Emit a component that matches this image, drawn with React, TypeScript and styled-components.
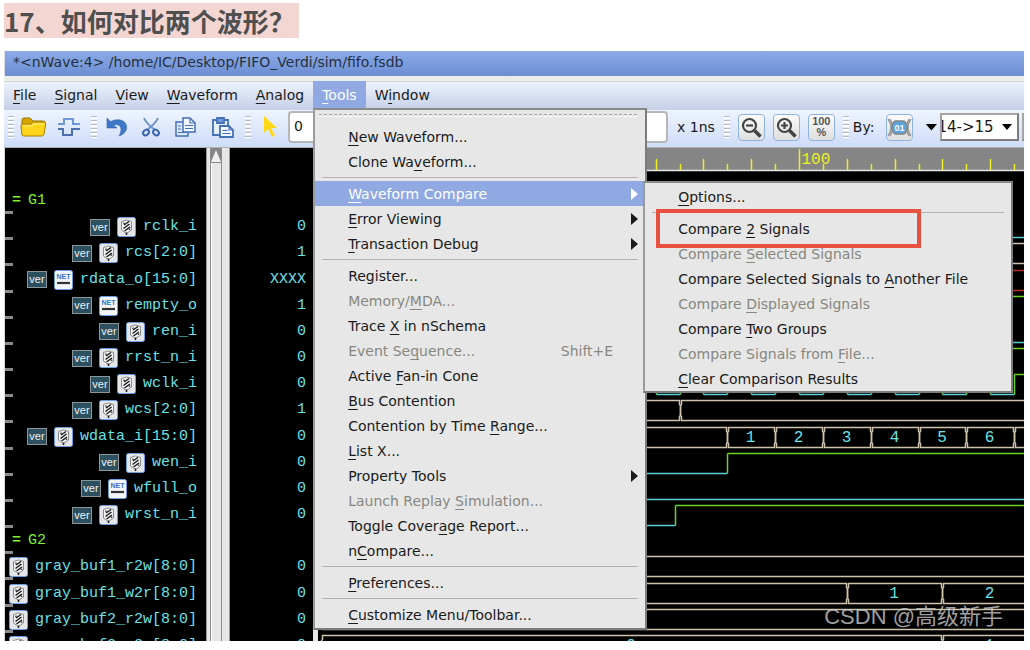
import React from "react";
import styled, { createGlobalStyle, css } from "styled-components";

const sans = `"DejaVu Sans", Verdana, sans-serif`;
const mono = `"Liberation Mono", "Courier New", monospace`;

const GlobalStyle = createGlobalStyle`
  *, *::before, *::after { box-sizing: border-box; }
  body { margin: 0; background: #fff; }
  button, input, select { font: inherit; color: inherit; margin: 0; }
`;

const Article = styled.main`
  padding: 3px 6px 8px 4px;
  font: 14px/20px ${sans};
  color: #1a1a1a;
`;

const Heading = styled.h1`
  margin: 0 0 13px;
  font: 700 26px/35px "Noto Sans CJK SC", sans-serif;
  color: #4f4f4f;

  span {
    display: inline-block;
    padding-right: 4px;
    background: #f3d6d1;
  }
`;

const AppWindow = styled.section`
  position: relative;
  background: #e6e6e6;
`;

const TitleBar = styled.header`
  height: 25px;
  padding: 0 8px;
  line-height: 22px;
  white-space: nowrap;
  color: #26303f;
  background: linear-gradient(#8cabea, #6b8dd0);
  border-left: 1px solid #d9dde6;
`;

const MenuBar = styled.nav`
  display: flex;
  height: 34px;
  border-top: 5px solid #ececec;
  box-shadow: inset 0 1px 0 #d2d2d2;
  background: linear-gradient(#eef4ff, #c5cfe6);
`;

const MenuSlot = styled.div`
  position: relative;
  display: flex;
`;

const MenuButton = styled.button<{ $open?: boolean }>`
  padding: 0 9px 2px;
  border: 0;
  background: ${(p) => (p.$open ? "#90a9e2" : "transparent")};
  color: ${(p) => (p.$open ? "#fff" : "#1a1a1a")};

  u { text-underline-offset: 3px; }
`;

const Popup = styled.div<{ $sub?: boolean }>`
  position: absolute;
  z-index: ${(p) => (p.$sub ? 3 : 2)};
  border: 2px solid #9a9a9a;
  border-top-color: #8a8a8a;
  border-right-color: #7c7c7c;
  border-bottom-color: #7c7c7c;
  background: #e7e7e7;
  color: #1a1a1a;
  ${(p) =>
    p.$sub
      ? css`
          top: 0;
          left: 328px;
          width: 370px;
          padding: 1px 0 0;
        `
      : css`
          top: 27px;
          left: 0;
          width: 334px;
          padding: 0 0 1px;
        `}
`;

const TearLine = styled.div`
  height: 14px;
  padding: 4px 8px 0 4px;

  &::after {
    content: "";
    display: block;
    height: 3px;
    border-top: 1px dashed #a3a3a3;
    border-bottom: 1px dashed #fff;
  }
`;

const Divider = styled.hr`
  height: 1px;
  margin: 3px 7px;
  border: 0;
  background: #b2b2b2;
`;

const ItemSlot = styled.div`
  position: relative;
`;

const Item = styled.button<{ $active?: boolean }>`
  display: flex;
  justify-content: space-between;
  align-items: center;
  width: 100%;
  height: 25px;
  padding: 0 32px 0 33px;
  border: 0;
  text-align: left;
  white-space: nowrap;
  background: ${(p) => (p.$active ? "#90a9e2" : "transparent")};
  color: ${(p) => (p.$active ? "#fff" : "#1a1a1a")};

  &:disabled { color: #878780; }
  u { text-underline-offset: 3px; }
`;

const ItemArrow = styled.span`
  width: 0;
  margin-right: -25px;
  border: solid transparent;
  border-width: 6px 0 6px 7px;
  border-left-color: ${"currentColor"};
`;

const Callout = styled.div`
  position: absolute;
  top: 26px;
  left: 11px;
  width: 265px;
  height: 39px;
  border: 4px solid #e8503f;
  pointer-events: none;
`;

const Toolbar = styled.div`
  display: flex;
  align-items: center;
  height: 37px;
  padding: 0 0 3px 4px;
  overflow: hidden;
  white-space: nowrap;
  background: linear-gradient(#eef4ff, #cfdcf8);
`;

const Grip = styled.span`
  flex: none;
  width: 6px;
  height: 22px;
  background: repeating-linear-gradient(#b4b9c4 0 1px, #fff 1px 3px, transparent 3px 4px);
`;

const ToolButton = styled.button`
  display: flex;
  flex: none;
  padding: 0;
  border: 0;
  background: none;
`;

const BoxButton = styled(ToolButton)`
  width: 27px;
  height: 27px;
  align-items: center;
  justify-content: center;
  border: 1px solid #8db4e3;
  border-radius: 4px;
  background: linear-gradient(#fcfcfc, #dedede);
`;

const Group = styled.div<{ $gap: number; $left: number }>`
  display: flex;
  flex: none;
  align-items: center;
  gap: ${(p) => p.$gap}px;
  margin-left: ${(p) => p.$left}px;
`;

const TimeField = styled.input`
  flex: none;
  width: 380px;
  height: 32px;
  margin-left: 11px;
  padding: 0 4px 3px;
  border: 2px solid #b6b6b6;
  border-radius: 4px;
  background: #fff;
`;

const SelectBox = styled.span<{ $wide?: boolean }>`
  position: relative;
  flex: none;
  width: ${(p) => (p.$wide ? 79 : 40)}px;
  height: 28px;
  margin-left: 3px;
  border: 2px solid #8b8b8b;
  border-color: #a5a5a5 #7c7c7c #7c7c7c #a5a5a5;
  background: #fff;
  overflow: hidden;

  &::after {
    content: "";
    position: absolute;
    top: 9px;
    right: 5px;
    border: solid transparent;
    border-width: 6px 5px 0;
    border-top-color: #000;
    pointer-events: none;
  }

  select {
    width: 100%;
    height: 24px;
    padding: 0;
    border: 0;
    appearance: none;
    background: transparent;
    text-indent: -5px;
    font-size: 15px;
  }
`;

const DropArrow = styled.button`
  flex: none;
  width: 12px;
  height: 7px;
  padding: 0;
  border: 0;
  background: #000;
  clip-path: polygon(0 0, 100% 0, 50% 100%);
`;

const Panes = styled.div`
  display: grid;
  grid-template-columns: 202px 24px 83px 5px minmax(0, 1fr);
  grid-template-rows: 100%;
  height: 494px;
  overflow: hidden;
  border-top: 1px solid #b0b0b0;
`;

const List = styled.ul`
  display: grid;
  grid-template-rows: repeat(18, minmax(0, 1fr));
  height: 511px;
  margin: 0;
  padding: 40px 7px 0 0;
  list-style: none;
  background: #000;
  color: #6fe0e4;
  font: 15px/20px ${mono};
`;

const Names = styled(List)`
  padding: 40px 9px 0 0;
  border-left: 1px solid #d8d8d8;
`;

const Row = styled.li`
  position: relative;
  display: flex;
  align-items: center;
  justify-content: flex-end;
  white-space: nowrap;
`;

const NameRow = styled(Row)<{ $group?: boolean }>`
  gap: 7px;
  ${(p) =>
    p.$group &&
    css`
      justify-content: flex-start;
      padding-left: 7px;
      color: #7ff02c;
    `}

  &::before {
    content: "";
    position: absolute;
    left: 0;
    bottom: 0;
    width: 8px;
    height: 3px;
    background: #8a8a8a;
  }
  svg { position: relative; flex: none; }
`;

const Badge = styled.span`
  width: 20px;
  height: 17px;
  border: 1px solid #8b979b;
  background: #2d5060;
  color: #eef3f4;
  font: 11px/15px "Liberation Sans", Arial, sans-serif;
  text-align: center;
`;

const ScrollArea = styled.div`
  padding: 0 7px 0 3px;
  background: #e6e6e6;
  border-left: 1px solid #999;
  border-right: 1px solid #999;
`;

const ScrollTrack = styled.div`
  height: 100%;
  border: solid #8c8c8c;
  border-width: 0 1px;
  background: #e6e6e6;
  box-shadow: inset 1px 0 #fff;
`;

const ScrollUp = styled.button`
  display: block;
  width: 100%;
  height: 15px;
  padding: 0;
  border: 0;
  background: #858585;

  &::after {
    content: "";
    display: block;
    width: 0;
    margin: 0 auto;
    border: solid transparent;
    border-width: 0 5px 12px;
    border-bottom-color: #f0f0f0;
  }
`;

const WavePane = styled.div`
  position: relative;
  background: #000;
  overflow: hidden;

  svg { display: block; width: 100%; height: 100%; }
  text { font-family: ${mono}; font-size: 16px; }
`;

const Watermark = styled.p`
  position: absolute;
  right: 21px;
  bottom: 8px;
  margin: 0;
  color: rgba(205, 205, 205, 0.78);
  font: 22px/32px "Liberation Sans", "Noto Sans CJK SC", sans-serif;
`;

/* ---------- icons ---------- */

const FolderIcon = () => (
  <svg width="27" height="22" viewBox="0 0 27 22">
    <path d="M2 18V4q0-2 2-2h6l3 3h10q2 0 2 2v4" fill="#d8a400" stroke="#987400" />
    <path d="M1 9.500q0-1.500 2-1.500h8l2-2h11q2 0 1.700 2l-1.700 10q-.3 2-2 2H4q-2 0-2.200-2z" fill="#ffd51c" stroke="#a88000" />
    <path d="M3 10h9l2-2h10" fill="none" stroke="#ffef8c" />
  </svg>
);

const PulseIcon = () => (
  <svg width="24" height="20" viewBox="0 0 24 20" fill="none" strokeWidth="2">
    <path d="M1 7h6V2h9v5h7" stroke="#6f98d8" />
    <path d="M1 12h5v6h9v-6h8" stroke="#4c6fae" />
  </svg>
);

const UndoIcon = () => (
  <svg width="21" height="20" viewBox="0 0 21 20">
    <path d="M1 1v10h10L7.500 8c4-1 7 0 7.500 4 0 2.500-.5 4.500-2 7 6-2 8-6 7.500-10C19.500 3 12 1 4.500 4.500z" fill="#3f78c8" stroke="#3465ad" strokeWidth=".6" />
  </svg>
);

const CutIcon = () => (
  <svg width="18" height="20" viewBox="0 0 18 20" fill="none">
    <path d="M2 1q2 5 11 12M16 1q-2 5-11 12" stroke="#6f90c6" strokeWidth="2" />
    <ellipse cx="4" cy="15.500" rx="3.200" ry="2.500" transform="rotate(-45 4 15.500)" stroke="#3766ae" strokeWidth="2" />
    <ellipse cx="14" cy="15.500" rx="3.200" ry="2.500" transform="rotate(45 14 15.500)" stroke="#3766ae" strokeWidth="2" />
  </svg>
);

const CopyIcon = () => (
  <svg width="22" height="20" viewBox="0 0 22 20" stroke="#4470b4" strokeWidth="1.500">
    <path d="M1 5h12v14H1z" fill="#dce8fb" />
    <path d="M8 1h7l5 5v9H8z" fill="#f1f6ff" />
    <path d="M15 1v5h5M10 8.500h8M10 11.500h8M3 9h3M3 12h3M3 15.500h8" fill="none" strokeWidth="1.200" />
  </svg>
);

const PasteIcon = () => (
  <svg width="22" height="21" viewBox="0 0 22 21" stroke="#4470b4" strokeWidth="1.800">
    <path d="M1 3h15v15H1z" fill="#e6effd" />
    <path d="M5 1h7v5H5z" fill="#6f98d8" />
    <path d="M8 9h9l4 4v7H8z" fill="#f1f6ff" />
    <path d="M17 9v4h4M10.500 13.500h5M10.500 16.500h8" fill="none" strokeWidth="1.200" />
  </svg>
);

const PointerIcon = () => (
  <svg width="14" height="22" viewBox="0 0 14 22">
    <path d="M1 0v17l4-4 4 8 3-1.500-4-7.500h6z" fill="#ffd914" />
  </svg>
);

const ZoomIcon = ({ plus }: { plus?: boolean }) => (
  <svg width="23" height="23" viewBox="0 0 23 23" fill="none" stroke="#444">
    <circle cx="9.500" cy="9.500" r="6.500" strokeWidth="2.200" />
    <path d="M14.500 14.500l6 6" strokeWidth="3.500" />
    <path d={plus ? "M6 9.500h7M9.500 6v7" : "M6 9.500h7"} strokeWidth="2.200" />
  </svg>
);

const FullZoomLabel = styled.span`
  font: 700 11px/11px "Liberation Sans", Arial, sans-serif;
  color: #555;
  text-align: center;
`;

const BusIcon = () => (
  <svg width="25" height="23" viewBox="0 0 25 23" fill="none" strokeWidth="1.500">
    <path d="M1 3q6 8.500 0 17M24 3q-6 8.500 0 17M3 3l4 8.500L3 20M22 3l-4 8.500 4 8.500" stroke="#999" />
    <path d="M8 5h9q3 2 3.500 6.500Q20 16 17 18H8q-3-2-3.500-6.500Q5 7 8 5z" fill="#5aa5dd" stroke="#858585" />
    <text x="12.500" y="15" textAnchor="middle" fill="#fff" fontFamily="Liberation Sans" fontSize="9" fontWeight="700">01</text>
  </svg>
);

const ModuleIcon = () => (
  <svg width="19" height="20" viewBox="0 0 19 20" fill="none">
    <rect x=".5" y=".5" width="18" height="19" rx="2" fill="#e4e6ea" stroke="#6c9ce0" />
    <path d="M4.500 4.500L9.500 3l5 1.500V13l-5 3.500-5-3.500z" fill="#f4f4f4" stroke="#8a8a8a" />
    <path d="M7 8l5-3.500M6.500 11.500l6-4.500M7.500 14l5.500-4M9.500 15.500V18" stroke="#1c1c1c" strokeWidth="1.500" />
    <path d="M7 5.500v1.500M12.500 11.500V13" stroke="#444" strokeWidth="1.500" />
  </svg>
);

const NetIcon = () => (
  <svg width="19" height="20" viewBox="0 0 19 20">
    <rect x=".5" y=".5" width="18" height="19" rx="2" fill="#f3f5f9" stroke="#6c9ce0" />
    <text x="9.500" y="9" textAnchor="middle" fill="#2f74c9" fontFamily="Liberation Sans" fontSize="7" fontWeight="700">NET</text>
    <path d="M3 13h13" stroke="#333" strokeWidth="2.200" />
  </svg>
);

/* ---------- data ---------- */

type Signal = { name: string; kind?: "reg" | "net"; ver?: boolean; value?: string };

const signals: Signal[] = [
  { name: "G1" },
  { name: "rclk_i", kind: "reg", ver: true, value: "0" },
  { name: "rcs[2:0]", kind: "reg", ver: true, value: "1" },
  { name: "rdata_o[15:0]", kind: "net", ver: true, value: "XXXX" },
  { name: "rempty_o", kind: "net", ver: true, value: "1" },
  { name: "ren_i", kind: "reg", ver: true, value: "0" },
  { name: "rrst_n_i", kind: "reg", ver: true, value: "0" },
  { name: "wclk_i", kind: "reg", ver: true, value: "0" },
  { name: "wcs[2:0]", kind: "reg", ver: true, value: "1" },
  { name: "wdata_i[15:0]", kind: "reg", ver: true, value: "0" },
  { name: "wen_i", kind: "reg", ver: true, value: "0" },
  { name: "wfull_o", kind: "net", ver: true, value: "0" },
  { name: "wrst_n_i", kind: "reg", ver: true, value: "0" },
  { name: "G2" },
  { name: "gray_buf1_r2w[8:0]", kind: "reg", value: "0" },
  { name: "gray_buf1_w2r[8:0]", kind: "reg", value: "0" },
  { name: "gray_buf2_r2w[8:0]", kind: "reg", value: "0" },
  { name: "gray_buf2_w2r[8:0]", kind: "reg", value: "0" },
];

type Entry = { label: string; off?: boolean; sub?: boolean; keys?: string } | "-";

/* An underscore marks the mnemonic letter that follows it. */
const toolsTop: Entry[] = [{ label: "_New Waveform..." }, { label: "Clone Wa_veform..." }, "-"];
const toolsRest: Entry[] = [
  { label: "_Error Viewing", sub: true },
  { label: "_Transaction Debug", sub: true },
  "-",
  { label: "Register..." },
  { label: "Memory/_MDA...", off: true },
  { label: "Trace _X in nSchema" },
  { label: "Event Se_quence...", off: true, keys: "Shift+E" },
  { label: "Active _Fan-in Cone" },
  { label: "_Bus Contention" },
  { label: "Contention by Time _Range..." },
  { label: "_List X..." },
  { label: "Property Tools", sub: true },
  { label: "Launch Replay _Simulation...", off: true },
  { label: "Toggle Cover_age Report..." },
  { label: "n_Compare..." },
  "-",
  { label: "_Preferences..." },
  "-",
  { label: "_Customize Menu/Toolbar..." },
];
const compareMenu: Entry[] = [
  { label: "_Options..." },
  "-",
  { label: "Compare _2 Signals" },
  { label: "Compare _Selected Signals", off: true },
  { label: "Compare Selected Signals to _Another File" },
  { label: "Compare _Displayed Signals", off: true },
  { label: "Compare _Two Groups" },
  { label: "Compare Signals from _File...", off: true },
  { label: "_Clear Comparison Results" },
];

const Mnemonic = ({ text }: { text: string }) => {
  const i = text.indexOf("_");
  if (i < 0) return <span>{text}</span>;
  return (
    <span>
      {text.slice(0, i)}
      <u>{text[i + 1]}</u>
      {text.slice(i + 2)}
    </span>
  );
};

const Entries = ({ items }: { items: Entry[] }) => (
  <>
    {items.map((e, i) =>
      e === "-" ? (
        <Divider key={i} />
      ) : (
        <Item key={i} role="menuitem" disabled={e.off}>
          <Mnemonic text={e.label} />
          {e.keys && <span>{e.keys}</span>}
          {e.sub && <ItemArrow />}
        </Item>
      )
    )}
  </>
);

/* ---------- waveforms ---------- */

const X = (ns: number) => Math.round(3 + 4.78 * ns) + 0.5;
const END = 600;
const CYAN = "#5ad0d8";
const GREEN = "#68d424";
const CREAM = "#cfc4ab";
const RED = "#b5301a";

const levels = (row: number) => {
  const c = 39 + 13 + (471 / 18) * row;
  const up = row > 13 ? 10 : 9;
  return { hi: Math.round(c - up) + 0.5, lo: Math.round(c - up) + 20.5 };
};

const Level = ({ row, from, to, high }: { row: number; from: number; to: number; high?: boolean }) => {
  const { hi, lo } = levels(row);
  return <path d={`M${X(from)} ${high ? hi : lo}H${X(to)}`} stroke={high ? GREEN : CYAN} />;
};

const Rise = ({ row, at }: { row: number; at: number }) => {
  const { hi, lo } = levels(row);
  return <path d={`M${X(at)} ${lo}V${hi}`} stroke={GREEN} />;
};

const Bus = ({ row, edges = [], values = [], color = CREAM }: { row: number; edges?: number[]; values?: string[]; color?: string }) => {
  const { hi, lo } = levels(row);
  const stops = [0, ...edges, END];
  return (
    <g>
      {stops.slice(1).map((end, i) => {
        const a = X(stops[i]);
        const b = X(end);
        return (
          <g key={i}>
            <path
              d={`M${a} ${hi + 5}L${a + 1} ${hi + 4}V${hi}H${b - 1}V${hi + 4}L${b} ${hi + 5}V${lo - 5}L${b - 1} ${lo - 4}V${lo}H${a + 1}V${lo - 4}L${a} ${lo - 5}z`}
              stroke={color}
            />
            {values[i] && (
              <text x={(a + Math.min(b, X(150))) / 2 - 1} y={lo - 6} textAnchor="middle" fill="#6fe0e4" stroke="none">
                {values[i]}
              </text>
            )}
          </g>
        );
      })}
    </g>
  );
};

const clock = Array.from({ length: 60 }, (_, i) => i * 10);

const Waves = () => (
  <svg fill="none" strokeWidth="1.500" role="img" aria-label="Waveforms">
    <rect width="100%" height="22" fill="#858585" />
    <path d="M0 22.500H3000" stroke="#e8e8e8" />
    {Array.from({ length: 120 }, (_, i) => i * 5).map((t) => (
      <path key={t} d={`M${X(t)} 22V${t % 100 === 0 ? 1 : t % 10 === 0 ? 11 : 16}`} stroke="#eeee28" />
    ))}
    <text x={X(100) + 2} y="16" fill="#eeee28">100</text>

    <Level row={1} from={0} to={END} />
    <Bus row={2} />
    <Bus row={3} color={RED} />
    <Level row={4} from={0} to={END} high />
    <Level row={5} from={0} to={END} />
    <Level row={6} from={0} to={END} high />
    {clock.map((t) => (
      <g key={t}>
        <Level row={7} from={t} to={t + 5} />
        <Rise row={7} at={t + 5} />
        <Level row={7} from={t + 5} to={t + 10} high />
        <Rise row={7} at={t + 10} />
      </g>
    ))}
    <Bus row={8} edges={[75]} />
    <Bus row={9} edges={[85, 95, 105, 115, 125, 135, 145]} values={["", "1", "2", "3", "4", "5", "6"]} />
    <Level row={10} from={0} to={85} />
    <Rise row={10} at={85} />
    <Level row={10} from={85} to={END} high />
    <Level row={11} from={0} to={END} />
    <Level row={12} from={0} to={74} />
    <Rise row={12} at={74} />
    <Level row={12} from={74} to={END} high />
    <Bus row={14} />
    <Bus row={15} edges={[110, 130]} values={["", "1", "2"]} />
    <Bus row={16} />
    <Bus row={17} edges={[130]} values={["0", "1"]} />
  </svg>
);

export default function App() {
  return (
    <Article>
      <GlobalStyle />
      <Heading>
        <span>17、如何对比两个波形？</span>
      </Heading>
      <AppWindow>
        <TitleBar>{"*<nWave:4> /home/IC/Desktop/FIFO_Verdi/sim/fifo.fsdb"}</TitleBar>
        <MenuBar>
          {["_File", "_Signal", "_View", "_Waveform", "_Analog"].map((m) => (
            <MenuButton key={m}>
              <Mnemonic text={m} />
            </MenuButton>
          ))}
          <MenuSlot>
            <MenuButton $open aria-expanded="true">
              <Mnemonic text="_Tools" />
            </MenuButton>
            <Popup role="menu">
              <TearLine />
              <Entries items={toolsTop} />
              <ItemSlot>
                <Item $active role="menuitem" aria-expanded="true">
                  <Mnemonic text="_Waveform Compare" />
                  <ItemArrow />
                </Item>
                <Popup $sub role="menu">
                  <Entries items={compareMenu} />
                  <Callout />
                </Popup>
              </ItemSlot>
              <Entries items={toolsRest} />
            </Popup>
          </MenuSlot>
          <MenuButton>
            <Mnemonic text="W_indow" />
          </MenuButton>
        </MenuBar>
        <Toolbar>
          <Grip />
          <Group $gap={10} $left={6}>
            <ToolButton aria-label="Open"><FolderIcon /></ToolButton>
            <ToolButton aria-label="Get signals"><PulseIcon /></ToolButton>
            <Grip />
          </Group>
          <Group $gap={15} $left={9}>
            <ToolButton aria-label="Undo"><UndoIcon /></ToolButton>
            <ToolButton aria-label="Cut"><CutIcon /></ToolButton>
            <ToolButton aria-label="Copy"><CopyIcon /></ToolButton>
            <ToolButton aria-label="Paste"><PasteIcon /></ToolButton>
          </Group>
          <Group $gap={12} $left={11}>
            <Grip />
            <ToolButton aria-label="Select"><PointerIcon /></ToolButton>
          </Group>
          <TimeField aria-label="Cursor time" defaultValue="0" />
          <Group $gap={9} $left={9}>
            <span>x 1ns</span>
            <Grip />
          </Group>
          <Group $gap={8} $left={8}>
            <BoxButton aria-label="Zoom out"><ZoomIcon /></BoxButton>
            <BoxButton aria-label="Zoom in"><ZoomIcon plus /></BoxButton>
            <BoxButton aria-label="Zoom all">
              <FullZoomLabel>100<br />%</FullZoomLabel>
            </BoxButton>
            <Grip />
          </Group>
          <Group $gap={12} $left={4}>
            <label htmlFor="by">By:</label>
            <BoxButton aria-label="Bus value"><BusIcon /></BoxButton>
            <DropArrow aria-label="More search types" />
          </Group>
          <SelectBox $wide>
            <select id="by" defaultValue="14->15">
              <option>{"14->15"}</option>
            </select>
          </SelectBox>
          <SelectBox />
        </Toolbar>
        <Panes>
          <Names>
            {signals.map((s) => (
              <NameRow key={s.name} $group={!s.kind}>
                {!s.kind && <b>=</b>}
                {s.ver && <Badge>ver</Badge>}
                {s.kind === "reg" && <ModuleIcon />}
                {s.kind === "net" && <NetIcon />}
                <span>{s.name}</span>
              </NameRow>
            ))}
          </Names>
          <ScrollArea>
            <ScrollTrack>
              <ScrollUp aria-label="Scroll up" />
            </ScrollTrack>
          </ScrollArea>
          <List>
            {signals.map((s) => (
              <Row key={s.name}>{s.value}</Row>
            ))}
          </List>
          <div />
          <WavePane>
            <Waves />
            <Watermark>CSDN @高级新手</Watermark>
          </WavePane>
        </Panes>
      </AppWindow>
    </Article>
  );
}
